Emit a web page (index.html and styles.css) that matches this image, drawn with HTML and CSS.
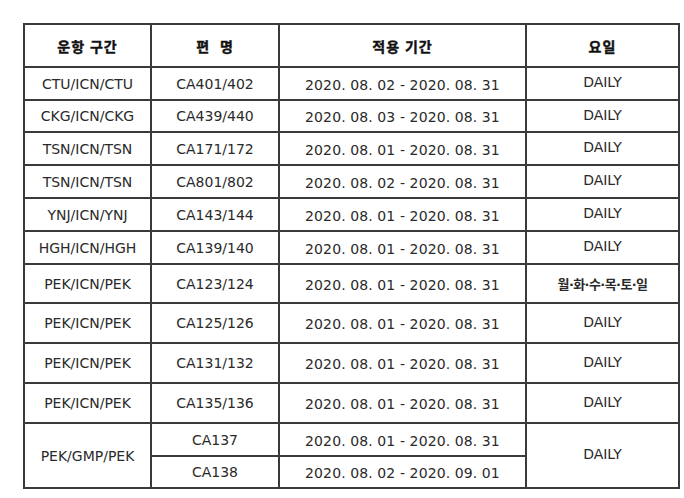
FILE: index.html
```html
<!DOCTYPE html>
<html lang="ko">
<head>
<meta charset="utf-8">
<title>운항 스케줄</title>
<link rel="stylesheet" href="styles.css">
</head>
<body>
<div class="page">
  <table class="schedule">
    <colgroup>
      <col class="c-route">
      <col class="c-flight">
      <col class="c-period">
      <col class="c-days">
    </colgroup>
    <thead>
      <tr class="h-head">
        <th>운항 구간</th>
        <th>편&nbsp;&nbsp;명</th>
        <th>적용 기간</th>
        <th>요일</th>
      </tr>
    </thead>
    <tbody>
      <tr class="h-a"><td>CTU/ICN/CTU</td><td>CA401/402</td><td class="date">2020. 08. 02 - 2020. 08. 31</td><td class="days">DAILY</td></tr>
      <tr class="h-b"><td>CKG/ICN/CKG</td><td>CA439/440</td><td class="date">2020. 08. 03 - 2020. 08. 31</td><td class="days">DAILY</td></tr>
      <tr class="h-a"><td>TSN/ICN/TSN</td><td>CA171/172</td><td class="date">2020. 08. 01 - 2020. 08. 31</td><td class="days">DAILY</td></tr>
      <tr class="h-a"><td>TSN/ICN/TSN</td><td>CA801/802</td><td class="date">2020. 08. 02 - 2020. 08. 31</td><td class="days">DAILY</td></tr>
      <tr class="h-a"><td>YNJ/ICN/YNJ</td><td>CA143/144</td><td class="date">2020. 08. 01 - 2020. 08. 31</td><td class="days">DAILY</td></tr>
      <tr class="h-a"><td>HGH/ICN/HGH</td><td>CA139/140</td><td class="date">2020. 08. 01 - 2020. 08. 31</td><td class="days">DAILY</td></tr>
      <tr class="h-c"><td>PEK/ICN/PEK</td><td>CA123/124</td><td class="date">2020. 08. 01 - 2020. 08. 31</td><td class="days ko">월<span class="dot">·</span>화<span class="dot">·</span>수<span class="dot">·</span>목<span class="dot">·</span>토<span class="dot">·</span>일</td></tr>
      <tr class="h-d"><td>PEK/ICN/PEK</td><td>CA125/126</td><td class="date">2020. 08. 01 - 2020. 08. 31</td><td class="days">DAILY</td></tr>
      <tr class="h-d"><td>PEK/ICN/PEK</td><td>CA131/132</td><td class="date">2020. 08. 01 - 2020. 08. 31</td><td class="days">DAILY</td></tr>
      <tr class="h-d"><td>PEK/ICN/PEK</td><td>CA135/136</td><td class="date">2020. 08. 01 - 2020. 08. 31</td><td class="days">DAILY</td></tr>
      <tr class="h-a"><td rowspan="2">PEK/GMP/PEK</td><td>CA137</td><td class="date">2020. 08. 01 - 2020. 08. 31</td><td class="days" rowspan="2">DAILY</td></tr>
      <tr class="h-b"><td>CA138</td><td class="date">2020. 08. 02 - 2020. 09. 01</td></tr>
    </tbody>
  </table>
</div>
</body>
</html>
```

FILE: styles.css
```css
html, body {
  margin: 0;
  padding: 0;
  background: #ffffff;
}

.page {
  padding: 23px 0 0 23px;
}

.schedule {
  border-collapse: collapse;
  table-layout: fixed;
  width: 655px;
  font-family: "DejaVu Sans", "Noto Sans CJK KR", sans-serif;
  font-size: 14px;
  color: #2a2a2a;
}

.c-route { width: 127px; }
.c-flight { width: 128px; }
.c-period { width: 247px; }
.c-days { width: 153px; }

.schedule th,
.schedule td {
  border: 2px solid #3a3a3a;
  padding: 0;
  text-align: center;
  vertical-align: middle;
  white-space: nowrap;
}

.schedule th {
  font-family: "Noto Sans CJK KR", sans-serif;
  font-weight: 700;
  font-size: 14px;
  letter-spacing: 1px;
  color: #111111;
  -webkit-text-stroke: 0.4px #111111;
}

.h-head { height: 43px; }
.h-a { height: 33px; }
.h-b { height: 32px; }
.h-c { height: 39px; }
.h-d { height: 40px; }

.schedule td.date {
  padding-top: 2px;
  letter-spacing: 0.1px;
}

.schedule td.days {
  padding-bottom: 3px;
}

.schedule td.ko {
  font-family: "Noto Sans CJK KR", sans-serif;
  font-size: 13px;
  font-weight: 700;
  letter-spacing: -0.6px;
  padding-bottom: 1px;
}

.schedule td.ko .dot {
  font-family: "DejaVu Sans", sans-serif;
  font-weight: 700;
}
```
